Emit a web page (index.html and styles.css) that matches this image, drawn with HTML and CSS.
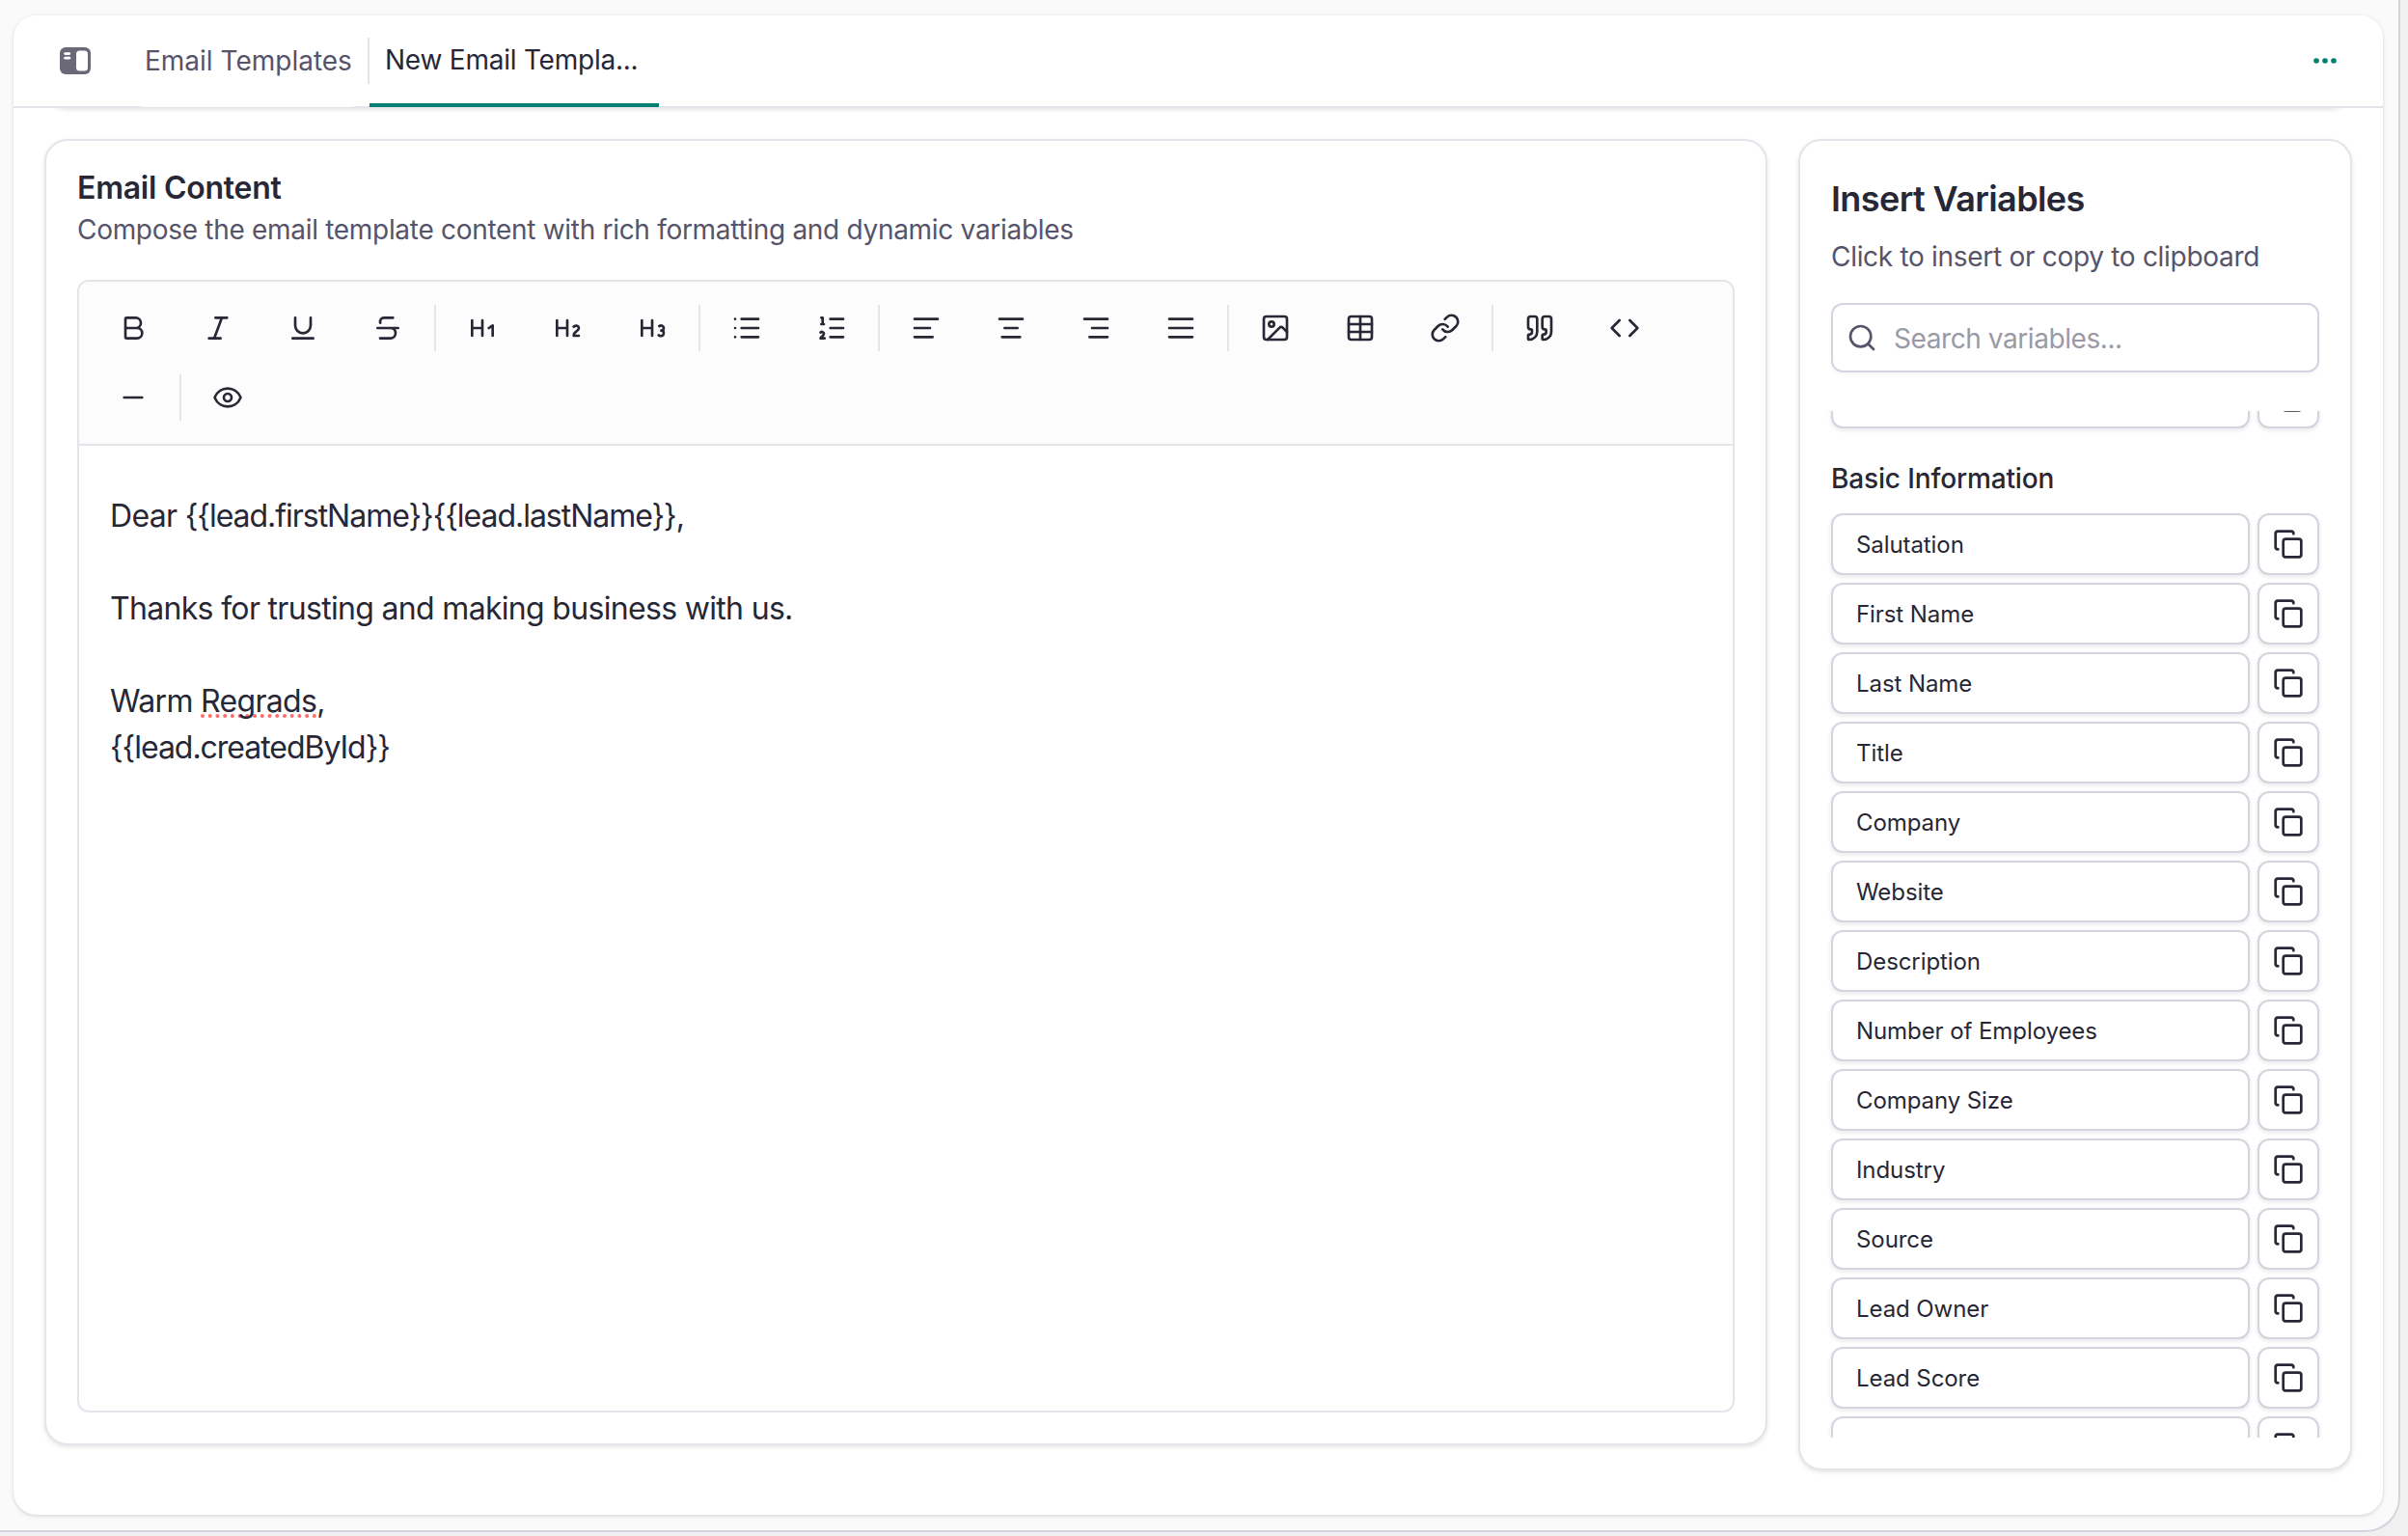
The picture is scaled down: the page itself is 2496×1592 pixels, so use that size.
FILE: index.html
```
<!DOCTYPE html>
<html lang="en">
<head>
	<meta charset="utf-8">
	<meta name="viewport" content="width=device-width, initial-scale=1">
	<title>New Email Template</title>
	<link rel="stylesheet" href="styles.css">
</head>
<body>
<div class="app">
   <div class="page">
      <header class="topbar">
         <svg class="sidebar-icon" viewBox="0 0 32 28">
            <rect width="32" height="28" rx="6"/>
            <rect class="hole" x="17" y="3.5" width="12" height="21" rx="3.5"/>
            <rect class="hole" x="4.2" y="5.2" width="7" height="2.8" rx="1.4"/>
            <rect class="hole" x="4.2" y="9.8" width="7" height="2.8" rx="1.4"/>
         </svg>
         <nav class="tabs">
            <a class="tab">Email Templates</a>
            <i class="divider"></i>
            <a class="tab active">New Email Templa...</a>
         </nav>
         <svg class="more" viewBox="0 0 24 6">
            <circle cx="3" cy="3" r="2.8"/>
            <circle cx="12" cy="3" r="2.8"/>
            <circle cx="21" cy="3" r="2.8"/>
         </svg>
      </header>

      <div class="content">
         <!-- details card, scrolled up behind the top bar -->
         <div class="card details"></div>

         <div class="columns">
            <section class="card editor-card">
               <h2>Email Content</h2>
               <p class="hint">Compose the email template content with rich formatting and dynamic variables</p>
               <div class="editor">
                  <div class="toolbar">
                     <button><svg viewBox="0 0 24 24"><path d="M6 12h9a4 4 0 0 1 0 8H7a1 1 0 0 1-1-1V5a1 1 0 0 1 1-1h7a4 4 0 0 1 0 8"/></svg></button>
                     <button><svg viewBox="0 0 24 24"><path d="M19 4h-9M14 20H5M15 4 9 20"/></svg></button>
                     <button><svg viewBox="0 0 24 24"><path d="M6 4v6a6 6 0 0 0 12 0V4M4 20h16"/></svg></button>
                     <button><svg viewBox="0 0 24 24"><path d="M16 4H9a3 3 0 0 0-2.83 4M14 12a4 4 0 0 1 0 8H6M4 12h16"/></svg></button>
                     <i class="sep"></i>
                     <button><svg viewBox="0 0 24 24"><path d="M4 12h8M4 18V6M12 18V6M17 12l3-2v8"/></svg></button>
                     <button><svg viewBox="0 0 24 24"><path d="M4 12h8M4 18V6M12 18V6M21 18h-4c0-4 4-3 4-6 0-1.5-2-2.5-4-1"/></svg></button>
                     <button><svg viewBox="0 0 24 24"><path d="M4 12h8M4 18V6M12 18V6M17.5 10.5c1.7-1 3.5 0 3.5 1.5a2 2 0 0 1-2 2M17 17.5c2 1.5 4 .3 4-1.5a2 2 0 0 0-2-2"/></svg></button>
                     <i class="sep"></i>
                     <button><svg viewBox="0 0 24 24"><path d="M3 5h.01M3 12h.01M3 19h.01M8 5h13M8 12h13M8 19h13"/></svg></button>
                     <button><svg viewBox="0 0 24 24"><path d="M11 5h10M11 12h10M11 19h10M4 4h1v5M4 9h2M6.5 20H3.4c0-1 2.6-1.925 2.6-3.5a1.5 1.5 0 0 0-2.6-1.02"/></svg></button>
                     <i class="sep"></i>
                     <button><svg viewBox="0 0 24 24"><path d="M21 5H3M15 12H3M17 19H3"/></svg></button>
                     <button><svg viewBox="0 0 24 24"><path d="M21 5H3M17 12H7M19 19H5"/></svg></button>
                     <button><svg viewBox="0 0 24 24"><path d="M21 5H3M21 12H9M21 19H7"/></svg></button>
                     <button><svg viewBox="0 0 24 24"><path d="M3 5h18M3 12h18M3 19h18"/></svg></button>
                     <i class="sep"></i>
                     <button><svg viewBox="0 0 24 24"><rect x="3" y="3" width="18" height="18" rx="2"/><circle cx="9" cy="9" r="2"/><path d="m21 15-3.086-3.086a2 2 0 0 0-2.828 0L6 21"/></svg></button>
                     <button><svg viewBox="0 0 24 24"><rect x="3" y="3" width="18" height="18" rx="2"/><path d="M12 3v18M3 9h18M3 15h18"/></svg></button>
                     <button><svg viewBox="0 0 24 24"><path d="M10 13a5 5 0 0 0 7.54.54l3-3a5 5 0 0 0-7.07-7.07l-1.72 1.71"/><path d="M14 11a5 5 0 0 0-7.54-.54l-3 3a5 5 0 0 0 7.07 7.07l1.71-1.71"/></svg></button>
                     <i class="sep"></i>
                     <button><svg viewBox="0 0 24 24"><path d="M16 3a2 2 0 0 0-2 2v6a2 2 0 0 0 2 2 1 1 0 0 1 1 1v1a2 2 0 0 1-2 2 1 1 0 0 0-1 1v2a1 1 0 0 0 1 1 6 6 0 0 0 6-6V5a2 2 0 0 0-2-2z"/><path d="M5 3a2 2 0 0 0-2 2v6a2 2 0 0 0 2 2 1 1 0 0 1 1 1v1a2 2 0 0 1-2 2 1 1 0 0 0-1 1v2a1 1 0 0 0 1 1 6 6 0 0 0 6-6V5a2 2 0 0 0-2-2z"/></svg></button>
                     <button><svg viewBox="0 0 24 24"><path d="m16 18 6-6-6-6M8 6l-6 6 6 6"/></svg></button>
                     <button><svg viewBox="0 0 24 24"><path d="M5 12h14"/></svg></button>
                     <i class="sep"></i>
                     <button><svg viewBox="0 0 24 24"><path d="M2.062 12.348a1 1 0 0 1 0-.696 10.75 10.75 0 0 1 19.876 0 1 1 0 0 1 0 .696 10.75 10.75 0 0 1-19.876 0"/><circle cx="12" cy="12" r="3"/></svg></button>
                  </div>
                  <div class="message">
                     <p>Dear <span class="token">{{lead.firstName}}</span><span class="token">{{lead.lastName}}</span>,</p>
                     <p><br></p>
                     <p>Thanks for trusting and making business with us.</p>
                     <p><br></p>
                     <p>Warm <span class="misspelled">Regrads</span>,</p>
                     <p><span class="token">{{lead.createdById}}</span></p>
                  </div>
               </div>
            </section>

            <aside class="card variables">
               <h3>Insert Variables</h3>
               <p class="hint">Click to insert or copy to clipboard</p>
               <div class="search">
                  <svg viewBox="0 0 24 24"><path d="m21 21-4.34-4.34"/><circle cx="11" cy="11" r="8"/></svg>
                  <span>Search variables...</span>
               </div>
               <div class="list" id="list"></div>
            </aside>
         </div>
      </div>
   </div>
</div>
<script>
var fields = [
   "Salutation",
   "First Name",
   "Last Name",
   "Title",
   "Company",
   "Website",
   "Description",
   "Number of Employees",
   "Company Size",
   "Industry",
   "Source",
   "Lead Owner",
   "Lead Score",
   ""
];
var list = document.getElementById("list");
var copyIcon =
   '<svg viewBox="0 0 24 24"><rect x="8" y="8" width="14" height="14" rx="2"/><path d="M4 16c-1.1 0-2-.9-2-2V4c0-1.1.9-2 2-2h10c1.1 0 2 .9 2 2"/></svg>';

function row(name) {
   return (
      '<div class="row"><button class="name">' + name +
      '</button><button class="copy">' + copyIcon + "</button></div>"
   );
}

list.innerHTML =
   '<div class="group previous">' + row("") + "</div>" +
   "<h4>Basic Information</h4>" +
   '<div class="group">' + fields.map(row).join("") + "</div>";
</script>
</body>
</html>
```
FILE: styles.css
```
* {
   box-sizing: border-box;
}

body {
   margin: 0;
   height: 100vh;
   overflow: hidden;
   background: #f0f0f1;
   font-family: Inter, "Liberation Sans", sans-serif;
   font-size: 28px;
   color: #272735;
}

h2,
h3,
h4,
p {
   margin: 0;
}

button {
   margin: 0;
   padding: 0;
   border: none;
   background: none;
   font-family: inherit;
   color: inherit;
}

svg {
   display: block;
   flex: none;
}

.toolbar svg,
.search svg,
.copy svg {
   width: 32px;
   height: 32px;
   fill: none;
   stroke: currentColor;
   stroke-width: 2;
   stroke-linecap: round;
   stroke-linejoin: round;
}

.app {
   width: 2488px;
   height: 1588px;
   padding: 16px 16px 16px 14px;
   background: #fafafa;
   border-right: 2px solid #d4d4e0;
   border-bottom: 2px solid #d4d4e0;
   border-bottom-right-radius: 36px;
}

.page {
   display: flex;
   flex-direction: column;
   height: 1554px;
   background: #fff;
   border-radius: 24px;
   box-shadow: 0 2px 4px rgba(0, 0, 0, 0.1), 0 0 4px rgba(0, 0, 0, 0.06);
   overflow: hidden;
}

/* top bar */
.topbar {
   position: relative;
   z-index: 1;
   display: flex;
   align-items: center;
   flex: none;
   height: 96px;
   padding: 0 48px;
   background: #fff;
   border-bottom: 2px solid #e4e4eb;
}

.sidebar-icon {
   width: 32px;
   height: 28px;
   fill: #6b6878;
}

.sidebar-icon .hole {
   fill: #fff;
}

.tabs {
   display: flex;
   align-items: center;
   align-self: stretch;
   flex: 1;
   margin: 0 0 -1px 44px;
}

.tab {
   display: flex;
   align-items: center;
   align-self: stretch;
   width: 237px;
   padding: 0 0 1px 12px;
   background: #fff;
   border-radius: 12px;
   color: #55546a;
}

.tab.active {
   width: 300px;
   padding: 0 0 0 16px;
   border-bottom: 4px solid #008073;
   border-radius: 0;
   color: #272735;
   letter-spacing: -0.23px;
}

.divider {
   width: 2px;
   height: 48px;
   margin: 0 0 1px 6px;
   background: #e4e4eb;
}

.more {
   width: 24px;
   height: 6px;
   fill: #008073;
}

/* cards */
.content {
   padding: 32px;
}

.card {
   background: #fff;
   border: 2px solid #e4e4eb;
   border-radius: 24px;
   box-shadow: 0 2px 4px rgba(39, 39, 53, 0.12);
}

.details {
   height: 80px;
   margin: -112px 0 32px;
}

.columns {
   display: flex;
   align-items: flex-start;
   gap: 32px;
}

.hint {
   line-height: 40px;
   letter-spacing: -0.3px;
   color: #55546a;
}

.editor-card {
   width: 1786px;
   height: 1354px;
   padding: 33px 32px 32px;
}

.editor-card h2 {
   margin-bottom: 7px;
   font-size: 32px;
   font-weight: 600;
   line-height: 32px;
   letter-spacing: -0.25px;
}

/* editor */
.editor {
   display: flex;
   flex-direction: column;
   height: 1174px;
   margin-top: 32px;
   border: 2px solid #e4e4eb;
   border-radius: 12px;
   overflow: hidden;
}

.toolbar {
   display: flex;
   flex-wrap: wrap;
   align-items: center;
   gap: 8px;
   padding: 16px;
   background: #fcfcfc;
   border-bottom: 2px solid #e4e4eb;
}

.toolbar button {
   display: flex;
   align-items: center;
   justify-content: center;
   width: 80px;
   height: 64px;
}

.sep {
   width: 2px;
   height: 48px;
   background: #e4e4eb;
}

.message {
   padding: 49px 32px;
   font-size: 32px;
   line-height: 48px;
   letter-spacing: -0.68px;
}

.token {
   letter-spacing: -1.03px;
}

.misspelled {
   text-decoration: underline dotted #ff6b6b 4px;
   text-decoration-skip-ink: none;
   text-underline-offset: 2px;
}

/* variables panel */
.variables {
   flex: 1;
   height: 1380px;
   padding: 32px;
}

.variables h3 {
   margin-bottom: 12px;
   font-size: 36px;
   font-weight: 600;
   line-height: 56px;
   letter-spacing: -0.6px;
}

.search {
   display: flex;
   align-items: center;
   gap: 17px;
   height: 72px;
   margin-top: 28px;
   padding: 0 14px;
   border: 2px solid #d4d4e0;
   border-radius: 12px;
   box-shadow: 0 2px 4px rgba(0, 0, 0, 0.04);
   letter-spacing: -0.43px;
   color: #9a99a6;
}

.search span {
   padding-top: 2px;
}

.search svg {
   color: #55546a;
}

.list {
   height: 1064px;
   margin: 40px -6px 0;
   padding: 0 6px;
   overflow: hidden;
}

.previous {
   margin-top: -46px;
}

.list h4 {
   margin: 32px 0 16px;
   font-size: 28px;
   font-weight: 500;
   line-height: 40px;
   letter-spacing: -0.14px;
}

.group {
   display: flex;
   flex-direction: column;
   gap: 8px;
}

.row {
   display: flex;
   gap: 8px;
}

.name,
.copy {
   height: 64px;
   background: #fff;
   border: 2px solid #d4d4e0;
   border-radius: 12px;
   box-shadow: 0 2px 4px rgba(39, 39, 53, 0.1);
}

.name {
   flex: 1;
   padding: 0 24px;
   font-size: 24px;
   letter-spacing: -0.08px;
   text-align: left;
}

.copy {
   display: flex;
   align-items: center;
   justify-content: center;
   width: 64px;
}
```
